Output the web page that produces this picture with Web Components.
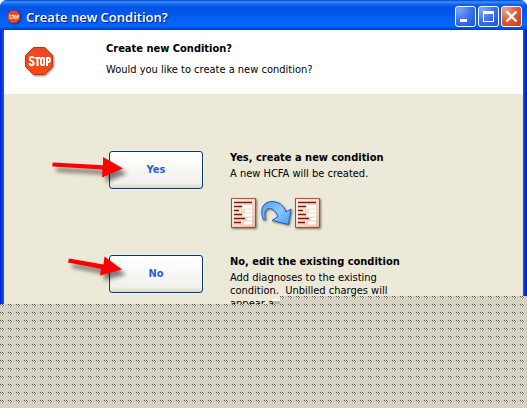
<!DOCTYPE html>
<html lang="en">
<head>
<meta charset="utf-8">
<title>Create new Condition?</title>
<style>
  body {
    margin: 0;
    min-height: 100vh;
    display: flex;
    flex-direction: column;
    overflow: hidden;
    background: #fff;
    color: #000;
    font-family: "DejaVu Sans Condensed", "Liberation Sans", sans-serif;
    font-size: 11px;
    line-height: 13px;
  }
</style>
</head>
<body>
  <xp-window>
    <stop-sign slot="icon" style="--size: 14px"></stop-sign>
    <span slot="title">Create new Condition?</span>
    <dialog-header>
      <stop-sign slot="icon" style="--size: 31px"></stop-sign>
      <span slot="title">Create new Condition?</span>
      <span slot="text">Would you like to create a new condition?</span>
    </dialog-header>
    <choice-list>
      <choice-row label="Yes">
        <callout-arrow slot="arrow" kind="flat"></callout-arrow>
        <span slot="title">Yes, create a new condition</span>
        <span slot="text">A new HCFA will be created.</span>
        <copy-picture slot="picture"></copy-picture>
      </choice-row>
      <choice-row label="No">
        <callout-arrow slot="arrow" kind="steep"></callout-arrow>
        <span slot="title">No, edit the existing condition</span>
        <span slot="text">Add diagnoses to the existing<br>condition.&nbsp; Unbilled charges will<br>appear as</span>
      </choice-row>
    </choice-list>
  </xp-window>
  <drag-trail></drag-trail>

<script>
  // the window frame: title bar, three caption buttons and the client area
  window.customElements.define(
    "xp-window",
    class extends HTMLElement {
      constructor() {
        super();
        const root = this.attachShadow({ mode: "open" });
        root.innerHTML = `
    <style>
      :host {
        display: block;
        padding: 0 4px;
        border-radius: 7px 7px 0 0;
        background: linear-gradient(90deg, #0018c8 0, #0831e0 1px, #0a50f0 3px, #0855e8 4px, #0855e8 calc(100% - 4px), #0a45e8 calc(100% - 3px), #0020c0 calc(100% - 1px), #0018a0);
      }
      header {
        display: flex;
        align-items: center;
        height: 30px;
        margin: 0 -4px;
        padding: 3px 5px 0 7px;
        box-sizing: border-box;
        border-radius: 7px 7px 0 0;
        background: linear-gradient(#0840c8 0, #3a90ff 2px, #1468f0 4px, #0455e4 7px, #0455e8 13px, #0562fa 20px, #0566ff 26px, #0450dc 28px, #023bc0 30px);
      }
      .title {
        flex: 1;
        margin-left: 5px;
        color: #fff;
        font: 600 13px/20px "Open Sans", "Noto Sans", sans-serif;
        text-shadow: 1px 1px 1px #0a1883;
      }
      .buttons {
        display: flex;
        gap: 2px;
      }
      button {
        width: 21px;
        height: 21px;
        padding: 0;
        border: 1px solid #fff;
        border-radius: 3px;
        background: radial-gradient(circle at 20% 15%, #7ea4fa, #3c70f0 50%, #1c4fdc);
      }
      .close {
        background: radial-gradient(circle at 20% 15%, #f0a088, #e0583a 50%, #c83c10);
      }
      svg {
        display: block;
      }
    </style>
    <header>
      <slot name="icon"></slot>
      <div class="title"><slot name="title"></slot></div>
      <div class="buttons">
        <button aria-label="Minimize"><svg width="19" height="19"><path d="M4 12h7v3H4z" fill="#fff"/></svg></button>
        <button aria-label="Maximize"><svg width="19" height="19"><path d="M4 4h11v11H4zM5 7v7h9V7z" fill="#fff" fill-rule="evenodd"/></svg></button>
        <button class="close" aria-label="Close"><svg width="19" height="19"><path d="M4.500 4.500l10 10M14.500 4.500l-10 10" stroke="#fff" stroke-width="2.300"/></svg></button>
      </div>
    </header>
    <slot></slot>
    `;
      }
    }
  );

  // red octagon, sized with --size
  window.customElements.define(
    "stop-sign",
    class extends HTMLElement {
      constructor() {
        super();
        const root = this.attachShadow({ mode: "open" });
        root.innerHTML = `
    <style>
      :host {
        display: block;
        width: var(--size);
        height: var(--size);
      }
      svg {
        display: block;
        overflow: visible;
        filter: drop-shadow(1px 1px 1px rgba(0, 0, 0, .5));
      }
    </style>
    <svg width="100%" height="100%" viewBox="0 0 31 31" aria-hidden="true">
      <defs><linearGradient id="g" x2="0" y2="1"><stop stop-color="#e8482a"/><stop offset="1" stop-color="#f84a10"/></linearGradient></defs>
      <path d="M9.500 1.500h11L28.500 9.500v11L20.500 28.500h-11L1.500 20.500v-11z" fill="url(#g)" stroke="#c8310c"/>
      <g fill="none" stroke="#fff" stroke-width="2">
        <path d="M9.500 12.500V12c0-1.200-3.500-1.200-3.500 0v1.500c0 1.500 3.500 1.500 3.500 3V18c0 1.500-3.700 1.500-3.700 0v-1"/>
        <path d="M11 12h5M13.500 12v8"/>
        <rect x="17" y="12" width="3" height="7" rx="1"/>
        <path d="M23 20v-8h1.500c2 0 2 4 0 4H23"/>
      </g>
    </svg>
    `;
      }
    }
  );

  // white band under the title bar
  window.customElements.define(
    "dialog-header",
    class extends HTMLElement {
      constructor() {
        super();
        const root = this.attachShadow({ mode: "open" });
        root.innerHTML = `
    <style>
      :host {
        display: grid;
        grid-template-columns: 82px 1fr;
        padding: 12px 20px 17px;
        background: #fff;
      }
      .icon {
        padding-top: 4px;
      }
      h1, p {
        margin: 0;
        font-size: 11px;
        line-height: 14px;
      }
      p {
        margin-top: 7px;
      }
    </style>
    <div class="icon"><slot name="icon"></slot></div>
    <div>
      <h1><slot name="title"></slot></h1>
      <p><slot name="text"></slot></p>
    </div>
    `;
      }
    }
  );

  window.customElements.define(
    "choice-list",
    class extends HTMLElement {
      constructor() {
        super();
        const root = this.attachShadow({ mode: "open" });
        root.innerHTML = `
    <style>
      :host {
        display: flex;
        flex-direction: column;
        gap: 25px;
        padding: 57px 20px 0 46px;
        background: #ece9d8;
      }
    </style>
    <slot></slot>
    `;
      }
    }
  );

  // a big button with its explanation on the right
  window.customElements.define(
    "choice-row",
    class extends HTMLElement {
      constructor() {
        super();
        const root = this.attachShadow({ mode: "open" });
        root.innerHTML = `
    <style>
      :host {
        display: grid;
        grid-template-columns: 59px 94px 1fr;
        align-items: start;
      }
      .button {
        grid-column: 2;
        position: relative;
      }
      button {
        width: 100%;
        height: 38px;
        padding: 0;
        border: 1px solid #003c74;
        border-radius: 3px;
        background: linear-gradient(#fff, #f2f1ec 85%, #dcd8cc);
        box-shadow: 0 0 0 1px #f4f2e8;
        color: #2a5fd0;
        font: bold 11px/14px "DejaVu Sans Condensed", sans-serif;
      }
      ::slotted(callout-arrow) {
        position: absolute;
        right: 86px;
        top: 0;
      }
      .text {
        padding-left: 27px;
      }
      h2, p {
        margin: 0;
        font-size: 11px;
        line-height: 14px;
      }
      p {
        margin-top: 2px;
        line-height: 13px;
      }
    </style>
    <div class="button">
      <button aria-describedby="title"></button>
      <slot name="arrow"></slot>
    </div>
    <div class="text">
      <h2 id="title"><slot name="title"></slot></h2>
      <p><slot name="text"></slot></p>
      <slot name="picture"></slot>
    </div>
    `;
        root.querySelector("button").textContent = this.getAttribute("label");
      }
    }
  );

  // red pointer lying over the button's left edge
  window.customElements.define(
    "callout-arrow",
    class extends HTMLElement {
      constructor() {
        super();
        const root = this.attachShadow({ mode: "open" });
        const shapes = {
          flat: "M7.600 11.500L58 14.200V6L78 17.500L57 26.500L57.500 18.500L7.400 15.500z",
          steep: "M24 3.500L58.500 9.500L59.500 1.500L77 14.500L55 20.500L56 14L23 7.500z",
        };
        root.innerHTML = `
    <style>
      :host {
        display: block;
        pointer-events: none;
      }
      svg {
        display: block;
        overflow: visible;
        filter: drop-shadow(4px 5px 2px rgba(0, 0, 0, .5));
      }
    </style>
    <svg width="72" height="34" aria-hidden="true"><path d="${shapes[this.getAttribute("kind")]}" fill="#f00"/></svg>
    `;
      }
    }
  );

  // form -> form
  window.customElements.define(
    "copy-picture",
    class extends HTMLElement {
      constructor() {
        super();
        const root = this.attachShadow({ mode: "open" });
        root.innerHTML = `
    <style>
      :host {
        display: block;
        margin-top: 17px;
      }
      svg {
        display: block;
        overflow: visible;
        filter: drop-shadow(1px 1px 1px rgba(60, 30, 20, .6));
      }
    </style>
    <svg width="92" height="33" aria-hidden="true">
      <defs>
        <linearGradient id="blue" x2="1" y2="1"><stop stop-color="#4f9df2"/><stop offset=".5" stop-color="#8cc6ff"/><stop offset="1" stop-color="#4c9cf4"/></linearGradient>
        <linearGradient id="paper" x2="1" y2="1"><stop stop-color="#fff4ea"/><stop offset="1" stop-color="#e4c0a8"/></linearGradient>
        <g id="form">
          <path d="M1.500 1.500h24v29h-24z" fill="url(#paper)" stroke="#a8492e"/>
          <path d="M1 1.500h25" stroke="#e04820"/>
          <path d="M13 10h9M15 14h7M13 18h9M17 22h5M14 26h8" stroke="#fff" stroke-width="3"/>
          <path d="M4 5.500h18M4 9.500h8M4 13.500h5M4 17.500h8M4 21.500h11M4 25.500h7" stroke="#85150c" stroke-width="1.500"/>
        </g>
      </defs>
      <use href="#form"/>
      <path d="M33.500 23C28.500 10 35 4.500 42 4.500c7 0 12 4.500 14 10.500l5-3-2.500 15.500L42 23.500l6-4c-2-5-5-8-8.500-8-4.500 0-5.500 5-4 11z" fill="url(#blue)" stroke="#1c62bd"/>
      <use href="#form" x="64"/>
    </svg>
    `;
      }
    }
  );

  // stippled area that hides the bottom of the window
  window.customElements.define(
    "drag-trail",
    class extends HTMLElement {
      constructor() {
        super();
        const root = this.attachShadow({ mode: "open" });
        root.innerHTML = `
    <style>
      :host {
        display: block;
        position: relative;
        flex: 1;
        margin-top: -6px;
      }
      .step {
        position: absolute;
        top: -8px;
        left: 272px;
        right: 0;
        height: 8px;
      }
      svg {
        position: absolute;
        width: 100%;
        height: 100%;
      }
    </style>
    <div class="step">
      <svg>
        <path d="M1 3h7v2H1z" fill="#fff"/>
        <path d="M1 5h7v3H1z" fill="#b8b4a6"/>
        <rect x="8" width="100%" height="100%" fill="url(#dots)"/>
      </svg>
    </div>
    <svg aria-hidden="true">
      <defs>
        <pattern id="dots" width="8" height="8" patternUnits="userSpaceOnUse" shape-rendering="crispEdges">
          <path d="M0 0h8v8H0z" fill="#d4d0c2"/>
          <path d="M0 0h1v1H0zM2 0h1v1H2z" fill="#4a483e"/>
          <path d="M1 1h1v1H1zM3 1h1v1H3z" fill="#8a8778"/>
          <path d="M0 2h1v1H0zM2 2h1v1H2z" fill="#a9a698"/>
          <path d="M1 0h1v1H1zM0 1h1v1H0zM2 1h1v1H2zM1 2h1v1H1z" fill="#f4f2e6"/>
        </pattern>
      </defs>
      <rect width="100%" height="100%" fill="url(#dots)"/>
    </svg>
    `;
      }
    }
  );
</script>
</body>
</html>
